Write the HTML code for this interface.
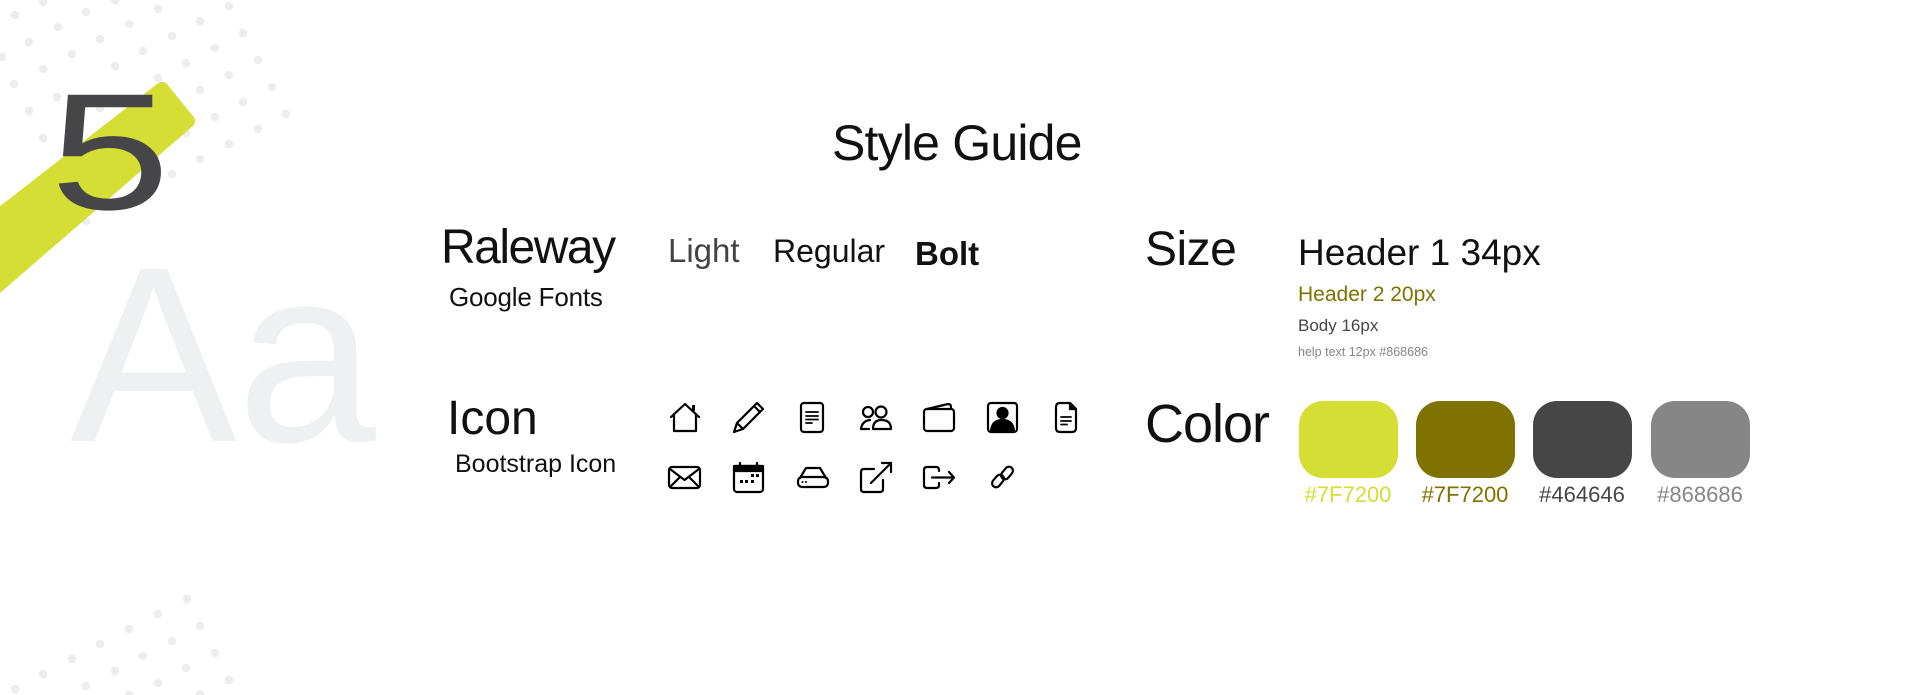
<!DOCTYPE html>
<html><head><meta charset="utf-8"><style>
html,body{margin:0;padding:0;background:#fff;}
body{width:1919px;height:695px;position:relative;overflow:hidden;font-family:"Liberation Sans",sans-serif;color:#111;}
.t{position:absolute;line-height:1;white-space:nowrap;}
.sw{position:absolute;top:401px;width:99px;height:77px;border-radius:24px;}
.lb{position:absolute;top:484px;width:120px;text-align:center;font-size:22px;line-height:1;}
svg.i{position:absolute;left:0;top:0;overflow:visible}
</style></head><body>
<svg width="1919" height="695" style="position:absolute;left:0;top:0">
<g fill="#ededef">
<circle cx="43" cy="2" r="4.3"/><circle cx="115" cy="0" r="4.3"/><circle cx="158" cy="9" r="4.3"/><circle cx="229" cy="6" r="4.3"/>
<circle cx="15" cy="15" r="4.3"/><circle cx="86" cy="12" r="4.3"/><circle cx="58" cy="27" r="4.3"/><circle cx="129" cy="24" r="4.3"/>
<circle cx="200" cy="21" r="4.3"/><circle cx="29" cy="42" r="4.3"/><circle cx="100" cy="39" r="4.3"/><circle cx="172" cy="36" r="4.3"/>
<circle cx="243" cy="33" r="4.3"/><circle cx="72" cy="54" r="4.3"/><circle cx="143" cy="51" r="4.3"/><circle cx="215" cy="48" r="4.3"/>
<circle cx="2" cy="57" r="4.3"/><circle cx="43" cy="69" r="4.3"/><circle cx="115" cy="66" r="4.3"/><circle cx="186" cy="63" r="4.3"/>
<circle cx="258" cy="60" r="4.3"/><circle cx="14" cy="84" r="4.3"/><circle cx="158" cy="78" r="4.3"/><circle cx="229" cy="75" r="4.3"/>
<circle cx="272" cy="87" r="4.3"/><circle cx="57" cy="97" r="4.3"/><circle cx="200" cy="90" r="4.3"/><circle cx="29" cy="111" r="4.3"/>
<circle cx="100" cy="108" r="4.3"/><circle cx="243" cy="102" r="4.3"/><circle cx="286" cy="114" r="4.3"/><circle cx="215" cy="117" r="4.3"/>
<circle cx="43" cy="138" r="4.3"/><circle cx="186" cy="133" r="4.3"/><circle cx="258" cy="129" r="4.3"/><circle cx="229" cy="144" r="4.3"/>
<circle cx="200" cy="159" r="4.3"/><circle cx="172" cy="174" r="4.3"/><circle cx="86" cy="221" r="4.3"/>
<circle cx="187" cy="599" r="4.3"/><circle cx="158" cy="614" r="4.3"/><circle cx="200" cy="626" r="4.3"/><circle cx="129" cy="629" r="4.3"/>
<circle cx="172" cy="641" r="4.3"/><circle cx="100" cy="644" r="4.3"/><circle cx="215" cy="653" r="4.3"/><circle cx="143" cy="656" r="4.3"/>
<circle cx="72" cy="659" r="4.3"/><circle cx="186" cy="668" r="4.3"/><circle cx="115" cy="671" r="4.3"/><circle cx="43" cy="674" r="4.3"/>
<circle cx="229" cy="680" r="4.3"/><circle cx="158" cy="683" r="4.3"/><circle cx="86" cy="686" r="4.3"/><circle cx="15" cy="689" r="4.3"/>
<circle cx="129" cy="695" r="4.3"/><circle cx="200" cy="694" r="4.3"/>
</g>
<polygon points="-50,254 162,89 188,121 -50,327" fill="#d5de35" stroke="#d5de35" stroke-width="14" stroke-linejoin="round"/>
</svg>
<div class="t" style="left:70px;top:230px;font-size:250px;color:#eff0f2;">Aa</div>
<div class="t" style="left:50px;top:70px;font-size:166px;color:#464648;transform:scaleX(1.3);transform-origin:0 0;">5</div>

<div class="t" style="left:832px;top:118px;font-size:50px;letter-spacing:-0.8px;">Style Guide</div>
<div class="t" style="left:441px;top:224px;font-size:48px;letter-spacing:-1.5px;">Raleway</div>
<div class="t" style="left:449px;top:284px;font-size:26px;letter-spacing:-0.2px;">Google Fonts</div>
<div class="t" style="left:668px;top:234px;font-size:33px;color:#444;">Light</div>
<div class="t" style="left:773px;top:235px;font-size:32px;">Regular</div>
<div class="t" style="left:915px;top:237px;font-size:33px;font-weight:bold;">Bolt</div>

<div class="t" style="left:1145px;top:226px;font-size:48px;letter-spacing:-0.5px;">Size</div>
<div class="t" style="left:1298px;top:234px;font-size:37px;">Header 1 34px</div>
<div class="t" style="left:1298px;top:284px;font-size:21px;color:#7f7200;">Header 2 20px</div>
<div class="t" style="left:1298px;top:317px;font-size:17px;color:#464646;">Body 16px</div>
<div class="t" style="left:1298px;top:346px;font-size:12.5px;color:#868686;">help text 12px #868686</div>

<div class="t" style="left:447px;top:395px;font-size:48px;">Icon</div>
<div class="t" style="left:455px;top:452px;font-size:25px;">Bootstrap Icon</div>

<div class="t" style="left:1145px;top:397px;font-size:54px;letter-spacing:-1px;">Color</div>
<div class="sw" style="left:1299px;background:#d5de35"></div>
<div class="sw" style="left:1416px;background:#7f7200"></div>
<div class="sw" style="left:1533px;background:#464646"></div>
<div class="sw" style="left:1651px;background:#868686"></div>
<div class="lb" style="left:1288px;color:#d4dd34">#7F7200</div>
<div class="lb" style="left:1405px;color:#7f7200">#7F7200</div>
<div class="lb" style="left:1522px;color:#464646">#464646</div>
<div class="lb" style="left:1640px;color:#868686">#868686</div>

<svg class="i" width="1919" height="695" fill="none" stroke="#000" stroke-width="2.2" stroke-linecap="round" stroke-linejoin="round">
<path d="M671 417 L685 404 L699 417 M674 414 V431 H696 V414"/>
<rect x="692" y="405" width="3" height="6" fill="#000" stroke="none"/>
<path d="M734 432 L737 423 L757 403 L763 409 L743 429 Z M737 423 L743 429 M754 406 L760 412"/>
<rect x="801" y="403" width="22" height="29" rx="3"/>
<path d="M806 412 H818 M806 416 H818 M806 419.5 H818 M806 423 H812" stroke-width="1.8"/>
<circle cx="868" cy="412" r="5"/><circle cx="881" cy="412" r="5.5"/>
<path d="M873 429 Q873 420 881.5 420 Q891 420 891 429 Z"/>
<path d="M870 420 Q862 421 861 429 H869"/>
<rect x="924" y="409" width="30" height="22" rx="3"/>
<path d="M927 409 L948 404 Q951 404 951 407 V409"/>
<rect x="988" y="403" width="29" height="29" rx="3"/>
<circle cx="1002.5" cy="413" r="5" fill="#000"/>
<path d="M991 431 Q992 420 1002.5 420 Q1013 420 1014 431 Z" fill="#000"/>
<path d="M1060 403 H1070 L1076 409 V428 Q1076 432 1072 432 H1060 Q1056 432 1056 428 V407 Q1056 403 1060 403 Z"/>
<path d="M1070 403 L1076 409 H1070 Z" fill="#000"/>
<path d="M1061 417 H1071 M1061 421 H1071 M1061 424.5 H1067" stroke-width="1.8"/>
<rect x="669" y="467" width="31" height="21" rx="3"/>
<path d="M670 469 L684.5 480 L699 469 M670 487 L680 477 M699 487 L689 477"/>
<rect x="734" y="466" width="29" height="26" rx="3"/>
<rect x="734" y="466" width="29" height="5" fill="#000"/>
<path d="M740 463 V466 M757 463 V466"/>
<g fill="#000" stroke="none"><rect x="740" y="480" width="3" height="3"/><rect x="745" y="480" width="3" height="3"/><rect x="751" y="474" width="3" height="3"/><rect x="756" y="474" width="3" height="3"/><rect x="751" y="480" width="3" height="3"/></g>
<path d="M800 478 L806 468 H820 L826 478"/>
<rect x="798" y="477" width="30" height="10" rx="4"/>
<g fill="#000" stroke="none"><circle cx="802.5" cy="482" r="1"/><circle cx="806" cy="482" r="1"/></g>
<path d="M874 469 H864 Q861 469 861 472 V489 Q861 492 864 492 H880 Q883 492 883 489 V480 M871 483 L891 463 M882 463 H891 V472"/>
<path d="M939 471 V470 Q939 467 936 467 H927 Q924 467 924 470 V485 Q924 488 927 488 H936 Q939 488 939 485 V483 M932 477.5 H954 M949 472 L954 477.5 L949 483"/>
<rect x="994" y="474" width="8" height="14" rx="4" transform="rotate(40 998 481)"/>
<rect x="1003" y="466" width="8" height="14" rx="4" transform="rotate(40 1007 473)"/>
</svg>
</body></html>
